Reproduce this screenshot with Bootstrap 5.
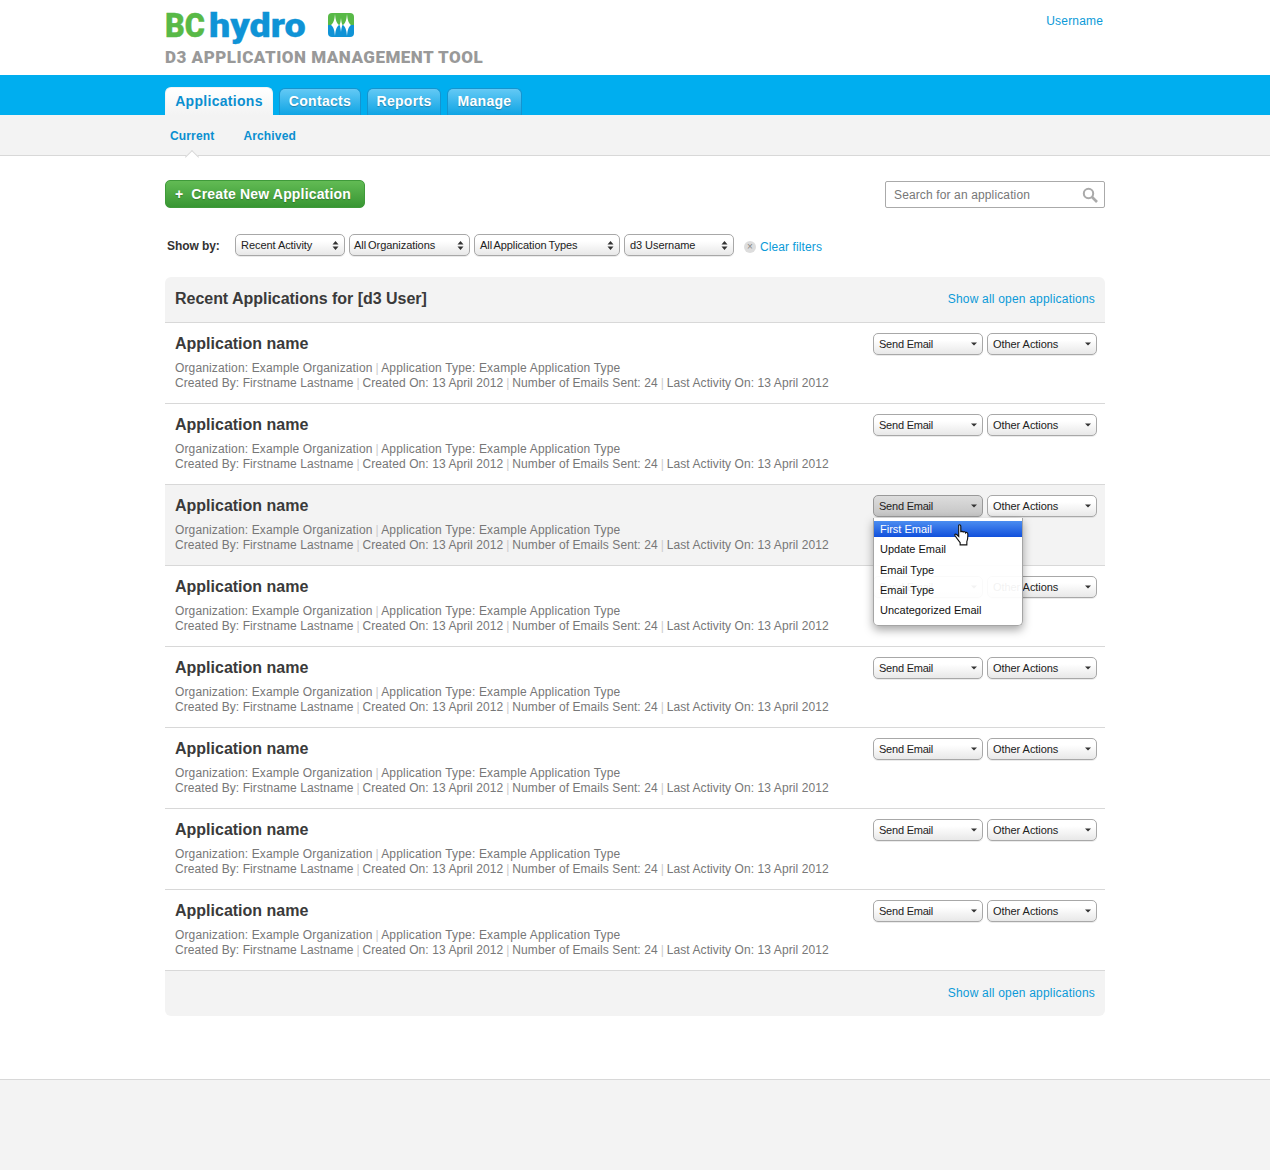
<!doctype html>
<html lang="en"><head><meta charset="utf-8"><title>D3 Application Management Tool</title>
<link rel="stylesheet" href="https://cdn.jsdelivr.net/npm/bootstrap@5.3.0/dist/css/bootstrap.min.css">
<style>
body{font-family:"Liberation Sans",Arial,sans-serif;font-size:12px;color:#333;background:#fff;min-height:1170px}
a{color:#0b9ad8;text-decoration:none}
.wrap{width:940px;margin:0 auto}
.brand-area{height:75px}
.logo-line{height:48px;padding-top:8px}
.logo-bc,.logo-hy{font-family:Roboto,sans-serif;font-weight:900;font-size:34px;line-height:34px;display:inline-block;transform-origin:left top}
.logo-bc{color:#58b947;width:44px;transform:scaleX(.9);-webkit-text-stroke:.4px #58b947}
.logo-hy{color:#0f93d6;width:96px;transform:scaleX(1.11);-webkit-text-stroke:.3px #0f93d6}
.logo-mark{margin-left:23px;margin-top:5px;flex:none}
.tool-name{font-family:Roboto,sans-serif;font-weight:900;font-size:17px;letter-spacing:.5px;color:#999;line-height:20px;margin-top:-1px}
.user-link{font-size:12px;letter-spacing:.17px;margin-right:2px;margin-top:12px}
.tab-bar{height:40px;background:#00aeef;padding-top:12px}
.tab-list{gap:6px}
.tab-item{display:block;margin-top:1px;height:27px;line-height:25px;text-align:center;font-size:14px;font-weight:700;letter-spacing:.3px;color:#fff;text-shadow:0 1px 1px rgba(0,0,0,.25);border:1px solid #1594cf;border-bottom:0;border-radius:6px 6px 0 0;background:linear-gradient(#63c9f5,#0fa4e4)}
.tab-item:hover{color:#fff}
.tab-item.on{margin-top:0;height:28px;line-height:27px;text-shadow:none;border-color:#f3f3f3;color:#0b8fd0;background:linear-gradient(#fff,#f3f3f3)}
.tw-1{width:108px}.tw-2{width:82px}.tw-3{width:74px}.tw-4{width:75px}
.sub-bar{height:41px;background:#f3f3f3;border-bottom:1px solid #d8d8d8}
.sub-item{font-weight:700;font-size:12px;letter-spacing:.15px;color:#0b8fd0;line-height:42px;position:relative}
.sub-item.on{margin-left:5px;margin-right:29px}
.sub-item.on::after{content:"";position:absolute;left:50%;bottom:0;margin-left:-5px;width:10px;height:10px;transform:translateY(5px) rotate(45deg);background:#fff;border:1px solid #d8d8d8;border-right:0;border-bottom:0}
.create-btn{height:28px;width:200px;padding:0 0 0 9px;font-size:14px;font-weight:700;letter-spacing:.17px;color:#fff;text-shadow:0 1px 1px rgba(0,0,0,.25);border:1px solid #3f9a3a;border-radius:5px;background:linear-gradient(#62bb54,#389633);text-align:left;line-height:26px}
.create-btn:hover{color:#fff;background:linear-gradient(#62bb54,#389633);border-color:#3f9a3a}
.create-btn b{margin-right:8px}
.search-box{width:220px;height:27px;margin-top:1px;border:1px solid #aaa;border-radius:2px;padding:0 6px 0 8px;font-size:12px;letter-spacing:.13px;color:#777}
.filter-row{margin-top:26px;height:22px}
.show-lbl{font-weight:700;font-size:12px;letter-spacing:-.08px;width:70px;padding:2px 0 0 2px}
.pick{height:22px;border:1px solid #a8a8a8;border-radius:5px;background:linear-gradient(#fff 30%,#e8e8e8);box-shadow:0 1px 0 rgba(0,0,0,.08);color:#222;font-size:11px;letter-spacing:-.06px;line-height:20px;padding:0 5px}
.pick svg{flex:none}
.w-a{width:110px}.w-b{width:121px;padding-left:4px}.w-c{width:146px}.w-d{width:110px}
.tight{word-spacing:-1px}
.send{width:110px;letter-spacing:-.22px}.other{width:110px}
.clear-wrap{margin-left:10px;font-size:12px;letter-spacing:.1px;margin-top:4px}
.x-dot{width:12px;height:12px;border-radius:50%;background:#ddd;color:#888;font-size:10px;line-height:11px;text-align:center;margin-right:4px}
.panel-head{margin-top:21px;height:46px;background:#f3f3f3;border-radius:6px 6px 0 0;border-bottom:1px solid #d8d8d8;padding:0 10px 2px}
.panel-title{font-size:16px;font-weight:700;color:#3a3a3a;margin:0;letter-spacing:-.03px}
.all-link{font-size:12px;letter-spacing:.2px}
.app-row{height:81px;border-bottom:1px solid #d8d8d8;padding:10px 8px 0 10px;position:relative}
.app-row.hot{background:#f3f3f3}
.app-name{font-size:16px;font-weight:700;color:#3a3a3a;line-height:22px;margin:0 0 6px}
.app-meta{font-size:12px;line-height:15px;color:#777;letter-spacing:.14px}
.app-meta i{font-style:normal;color:#ccc;margin:0 -.5px}
.app-meta .meta-b{letter-spacing:.18px;margin-left:-.6px}
.app-meta .meta-c{letter-spacing:.08px}
.row-btns{position:absolute;right:8px;top:10px}
.pick.open{background:linear-gradient(#ddd,#c4c4c4);border-color:#999}
.send-menu{position:absolute;left:708px;top:33px;width:150px;height:108px;z-index:5;background:rgba(255,255,255,.94);border:1px solid #a5a5a5;border-top:0;border-radius:0 0 5px 5px;box-shadow:0 4px 10px rgba(0,0,0,.35);padding:3px 0 0;font-size:11px;color:#111}
.send-menu div{height:20.2px;line-height:20px;padding:0 6px}
.send-menu .first{height:16px;line-height:16px;color:#fff;background:linear-gradient(#4b8df0,#1150dc);margin-bottom:2.4px}
.hand{position:absolute;left:80px;top:5px;z-index:6}
.panel-foot{height:45px;background:#f3f3f3;border-radius:0 0 6px 6px;padding:0 10px 2px}
.page-foot{margin-top:63px;height:91px;background:#f3f3f3;border-top:1px solid #d8d8d8}
</style></head><body>
<div class="brand-area"><div class="wrap d-flex justify-content-between">
<div>
<div class="logo-line d-flex align-items-start"><span class="logo-bc">BC</span><span class="logo-hy">hydro</span>
<svg class="logo-mark" width="26" height="24" viewBox="0 0 26 24"><path d="M4 0h18a4 4 0 0 1 4 4v8H0V4a4 4 0 0 1 4-4z" fill="#58b947"/><path d="M0 12h26v8a4 4 0 0 1-4 4H4a4 4 0 0 1-4-4z" fill="#0f93d6"/><path d="M7 1c.5 6 1.500 9 4 11-2.500 2-3.500 5-4 11-.5-6-1.500-9-4-11 2.500-2 3.500-5 4-11zM19 1c.5 6 1.500 9 4 11-2.500 2-3.500 5-4 11-.5-6-1.500-9-4-11 2.500-2 3.500-5 4-11zM13 5c.3 3 .6 5 1.500 7-.9 2-1.200 4-1.500 7-.3-3-.6-5-1.500-7 .9-2 1.200-4 1.500-7z" fill="#fff"/></svg></div>
<div class="tool-name">D3 APPLICATION MANAGEMENT TOOL</div>
</div>
<a class="user-link" href="#">Username</a>
</div></div>

<div class="tab-bar"><ul class="wrap nav tab-list flex-nowrap">
<li class="nav-item"><a class="tab-item tw-1 on" href="#">Applications</a></li>
<li class="nav-item"><a class="tab-item tw-2" href="#">Contacts</a></li>
<li class="nav-item"><a class="tab-item tw-3" href="#">Reports</a></li>
<li class="nav-item"><a class="tab-item tw-4" href="#">Manage</a></li>
</ul></div>
<div class="sub-bar"><div class="wrap d-flex"><a class="sub-item on" href="#">Current</a><a class="sub-item" href="#">Archived</a></div></div>

<main class="wrap pt-4">
<div class="d-flex justify-content-between align-items-start">
<button class="btn create-btn" type="button"><b>+</b>Create New Application</button>
<div class="search-box d-flex justify-content-between align-items-center"><span>Search for an application</span>
<svg width="16" height="16" viewBox="0 0 16 16" fill="none" stroke="#aaa"><circle cx="6.500" cy="6.500" r="4.700" stroke-width="2"/><path d="M10 10l5 5" stroke-width="2.600"/></svg></div>
</div>

<div class="filter-row d-flex align-items-center">
<span class="show-lbl">Show by:</span>
<div class="d-flex gap-1">
<div class="pick w-a d-flex justify-content-between align-items-center"><span>Recent Activity</span><svg width="7" height="9" viewBox="0 0 7 9" fill="#333"><path d="M3.500 0L6.500 3.500H.5zM3.500 9L.5 5.500H6.500z"/></svg></div>
<div class="pick w-b d-flex justify-content-between align-items-center"><span class="tight">All Organizations</span><svg width="7" height="9" viewBox="0 0 7 9" fill="#333"><path d="M3.500 0L6.500 3.500H.5zM3.500 9L.5 5.500H6.500z"/></svg></div>
<div class="pick w-c d-flex justify-content-between align-items-center"><span class="tight">All Application Types</span><svg width="7" height="9" viewBox="0 0 7 9" fill="#333"><path d="M3.500 0L6.500 3.500H.5zM3.500 9L.5 5.500H6.500z"/></svg></div>
<div class="pick w-d d-flex justify-content-between align-items-center"><span>d3 Username</span><svg width="7" height="9" viewBox="0 0 7 9" fill="#333"><path d="M3.500 0L6.500 3.500H.5zM3.500 9L.5 5.500H6.500z"/></svg></div>
</div>
<div class="clear-wrap d-flex align-items-center"><span class="x-dot">×</span><a href="#">Clear filters</a></div>
</div>

<div class="panel-head d-flex justify-content-between align-items-center"><h2 class="panel-title">Recent Applications for [d3 User]</h2><a class="all-link" href="#">Show all open applications</a></div>

<div id="rows"></div>

<div class="panel-foot d-flex justify-content-end align-items-center"><a class="all-link" href="#">Show all open applications</a></div>
</main>
<div class="page-foot"></div>
<script>
var caret='<svg width="6" height="4" viewBox="0 0 6 4" fill="#333"><path d="M0 .5h6L3 3.500z"/></svg>';
var h='';
for(var i=0;i<8;i++){
 h+='<div class="app-row'+(i==2?' hot':'')+'"><h3 class="app-name">Application name</h3>'+
 '<div class="app-meta">Organization: Example Organization <i>|</i> <span class="meta-b">Application Type: Example Application Type</span><br><span class="meta-c">Created By: Firstname Lastname <i>|</i> Created On: 13 April 2012 <i>|</i> Number of Emails Sent: 24 <i>|</i> Last Activity On: 13 April 2012</span></div>'+
 '<div class="row-btns d-flex gap-1"><div class="pick send d-flex justify-content-between align-items-center'+(i==2?' open':'')+'"><span>Send Email</span>'+caret+'</div><div class="pick other d-flex justify-content-between align-items-center"><span>Other Actions</span>'+caret+'</div></div>'+
 (i==2?'<div class="send-menu"><div class="first">First Email</div><div>Update Email</div><div>Email Type</div><div>Email Type</div><div>Uncategorized Email</div><svg class="hand" width="17" height="24" viewBox="0 0 18 24"><path d="M5 1.500c1-.8 2.200 0 2.200 1.200V9c.2-1.200 2.400-1.200 2.600.2.300-1 2.300-1 2.500.5.500-.7 2.200-.5 2.300 1 .2 3 0 5.500-1 8.300v3.500H6.500V20C4.500 17.500 2.500 15 1 12.500c-.6-1.200.8-2 1.800-1L5 13.500V2.500z" fill="#fff" stroke="#111" stroke-width="1.200"/></svg></div>':'')+
 '</div>';
}
document.getElementById('rows').innerHTML=h;
</script>
</body></html>
